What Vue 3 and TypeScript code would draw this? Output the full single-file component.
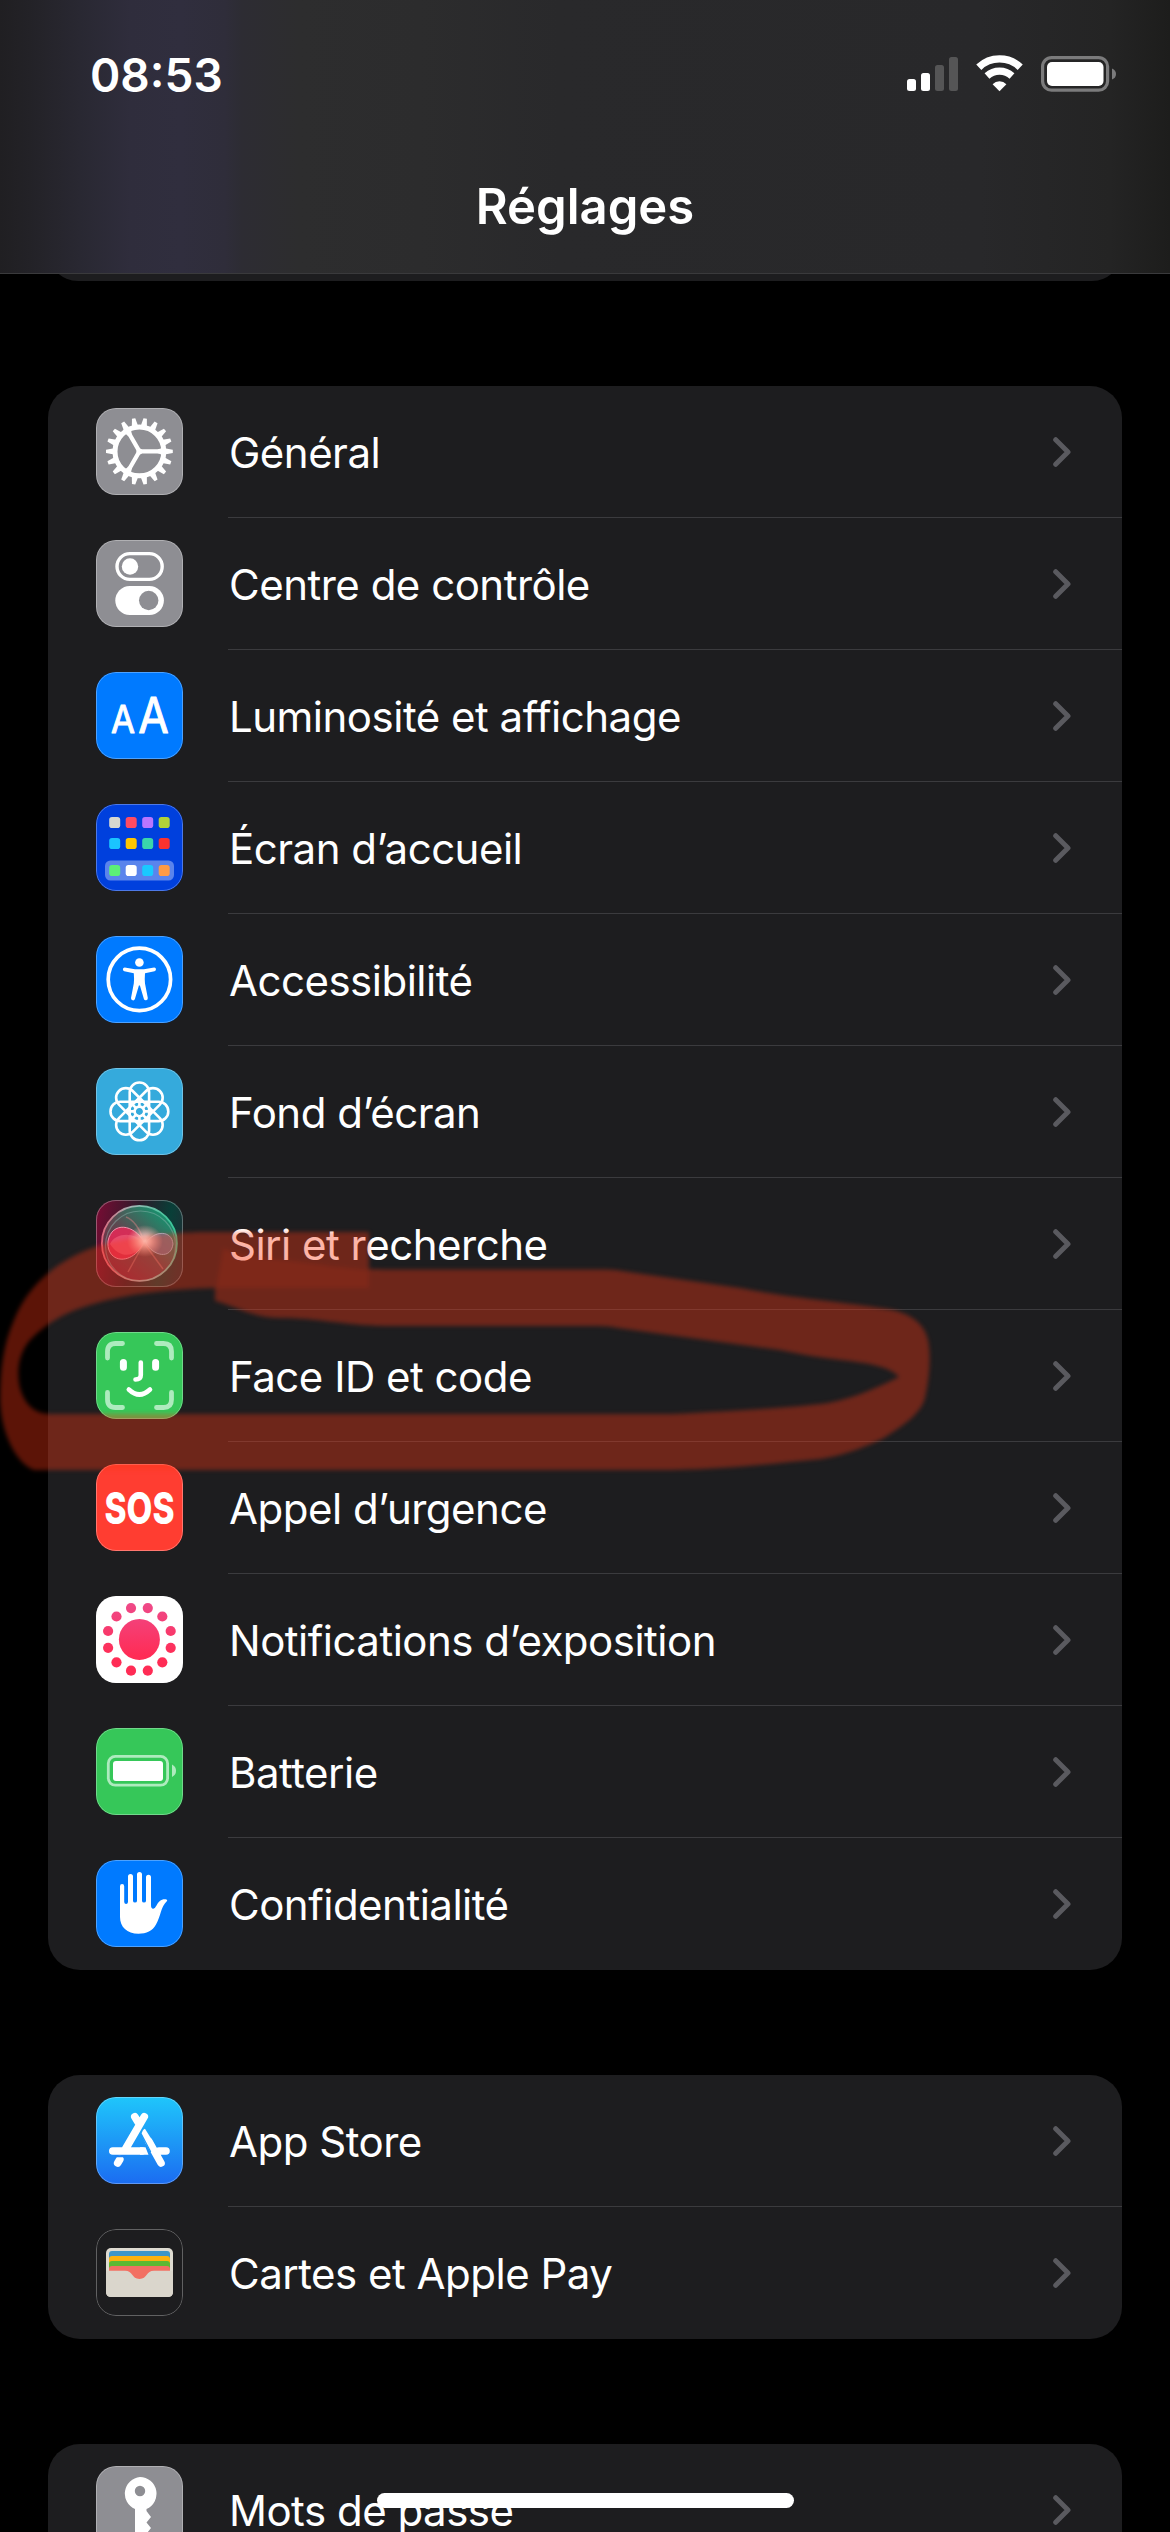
<template>
  <div class="screen">
    <header class="header">
      <div class="status-bar">
        <span class="time">08:53</span>
        <div class="status-icons">
          <svg class="signal" width="51" height="40" viewBox="0 0 51 40">
            <rect x="0" y="26" width="9" height="12" rx="2.5" fill="#fff" />
            <rect x="14" y="20" width="9" height="18" rx="2.5" fill="#fff" />
            <rect x="28" y="12" width="9" height="26" rx="2.5" fill="#555556" />
            <rect x="42" y="4" width="9" height="34" rx="2.5" fill="#555556" />
          </svg>
          <svg class="wifi" width="50" height="40" viewBox="0 0 50 40">
            <path d="M3.8 14.2a30 30 0 0 1 41.4 0" stroke="#fff" stroke-width="7.4" fill="none" />
            <path d="M12 23a18.6 18.6 0 0 1 25 0" stroke="#fff" stroke-width="7.2" fill="none" />
            <path d="M17.6 31.2a9.6 9.6 0 0 1 13.8 0L24.5 38.3z" fill="#fff" />
          </svg>
          <svg class="battery" width="76" height="40" viewBox="0 0 76 40">
            <rect x="1.6" y="4.6" width="65" height="32.6" rx="9" fill="none" stroke="#7b7b7c" stroke-width="3.2" />
            <rect x="6" y="9" width="56.5" height="24" rx="5" fill="#fff" />
            <path d="M71 15.5q4 1.5 4 5.5t-4 5.5z" fill="#7b7b7c" />
          </svg>
        </div>
      </div>
      <h1 class="title">Réglages</h1>
    </header>

    <main class="content">
      <div class="group-tail"><div class="group-tail-body" /></div>

      <section v-for="(group, index) in groups" :key="index" class="group">
        <div v-for="row in group" :key="row.icon" class="row">
          <div :class="['icon', `icon-${row.icon}`]">
            <svg v-if="row.icon === 'general'" viewBox="0 0 87 87">
              <g transform="translate(43.4 43.4)" fill="#fff">
                <path v-for="n in 18" :key="n" d="M24 -3.4L33.4 -1.7V1.7L24 3.4z" :transform="`rotate(${n * 20})`" />
                <circle r="24.4" fill="none" stroke="#fff" stroke-width="5" />
                <path v-for="n in 3" :key="`s${n}`" d="M0 -2.1H18Q21 -2.3 23 -4V4Q21 2.3 18 2.1H0z" :transform="`rotate(${n * 120})`" />
                <circle r="3" />
              </g>
            </svg>

            <svg v-else-if="row.icon === 'control'" viewBox="0 0 87 87">
              <rect x="21" y="13.6" width="45.2" height="25.8" rx="12.9" fill="none" stroke="#fff" stroke-width="3.4" />
              <circle cx="34" cy="26.5" r="8.2" fill="#fff" />
              <rect x="19.3" y="46" width="48.6" height="29" rx="14.5" fill="#fff" />
              <circle cx="52.7" cy="60.5" r="9.7" fill="#8e8e93" />
            </svg>

            <svg v-else-if="row.icon === 'display'" viewBox="0 0 87 87" class="letters">
              <text x="15" y="61" font-size="38" textLength="24" lengthAdjust="spacingAndGlyphs">A</text>
              <text x="42.3" y="61" font-size="49" textLength="30.5" lengthAdjust="spacingAndGlyphs">A</text>
            </svg>

            <svg v-else-if="row.icon === 'home'" viewBox="0 0 87 87">
              <rect x="9" y="56.5" width="69" height="20" rx="5.5" fill="#5a84ec" />
              <rect
                v-for="(color, n) in homeColors"
                :key="n"
                :x="13.2 + (n % 4) * 16.5"
                :y="[13, 34, 61][Math.floor(n / 4)]"
                width="11"
                height="11"
                rx="2.8"
                :fill="color"
              />
            </svg>

            <svg v-else-if="row.icon === 'accessibility'" viewBox="0 0 87 87">
              <circle cx="43.4" cy="43.4" r="31.2" fill="none" stroke="#fff" stroke-width="3.7" />
              <circle cx="43.4" cy="26.5" r="4.3" fill="#fff" />
              <path
                d="M28.7 31.6L39 33.3H48L58.2 31.6Q60 31.7 60 33.2T58.5 35.2L49 37.2Q48.5 43 49 47.5L51.8 62Q52 64 50.2 64.3T47.9 63L43.9 49.5H42.9L38.9 63Q38.3 64.7 36.6 64.3T35 62L37.8 47.5Q38.3 43 37.8 37.2L28.3 35.2Q26.8 34.7 26.9 33.2T28.7 31.6z"
                fill="#fff"
              />
            </svg>

            <svg v-else-if="row.icon === 'wallpaper'" viewBox="0 0 87 87">
              <g transform="translate(43.4 43.4)" fill="none" stroke="#fff" stroke-width="2.6">
                <rect v-for="n in 4" :key="n" x="-9.7" y="-28.9" width="19.4" height="57.8" rx="9.7" :transform="`rotate(${n * 45})`" />
                <path v-for="n in 8" :key="`r${n}`" d="M0 -13.5V-4" :transform="`rotate(${n * 45})`" />
                <circle r="4.8" />
              </g>
            </svg>

            <svg v-else-if="row.icon === 'siri'" viewBox="0 0 87 87">
              <defs>
                <linearGradient id="siriBack" x1="0" y1="0.3" x2="1" y2="0.5">
                  <stop offset="0" stop-color="#720d33" />
                  <stop offset="0.45" stop-color="#2b1c2a" />
                  <stop offset="0.8" stop-color="#093f38" />
                  <stop offset="1" stop-color="#1d3035" />
                </linearGradient>
                <linearGradient id="siriOrb" x1="0.1" y1="0.8" x2="0.8" y2="0">
                  <stop offset="0" stop-color="#7c2541" />
                  <stop offset="0.45" stop-color="#5d4850" />
                  <stop offset="1" stop-color="#0f9a72" />
                </linearGradient>
                <linearGradient id="siriRim" x1="0" y1="0.5" x2="1" y2="0.3">
                  <stop offset="0" stop-color="#e0637b" />
                  <stop offset="0.5" stop-color="#9db8b5" />
                  <stop offset="1" stop-color="#31c897" />
                </linearGradient>
                <radialGradient id="siriGlow">
                  <stop offset="0" stop-color="#fff" />
                  <stop offset="0.3" stop-color="#ffd9d5" stop-opacity="0.85" />
                  <stop offset="1" stop-color="#ffb0a8" stop-opacity="0" />
                </radialGradient>
              </defs>
              <rect width="87" height="87" fill="url(#siriBack)" />
              <circle cx="43.4" cy="43.4" r="37.5" fill="url(#siriOrb)" stroke="url(#siriRim)" stroke-width="1.8" />
              <circle cx="44.5" cy="46" r="35" fill="none" stroke="#8fb7b2" stroke-opacity="0.45" stroke-width="1.2" />
              <path d="M48 42C38 24 16 21 12 41C10 63 36 67 48 42z" fill="#e82958" fill-opacity="0.85" stroke="#f293ac" />
              <path d="M48 43C39 32 20 32 14 44C24 60 41 57 48 43z" fill="#fa6b85" fill-opacity="0.5" />
              <path d="M50 43C58 30 76 30 77 44C75 60 57 56 50 43z" fill="#7b799b" fill-opacity="0.7" stroke="#a1b2c5" />
              <path d="M48 43L67 69M48 43L32 72M48 43C44 27 36 19 30 17" fill="none" stroke="#d38282" stroke-opacity="0.5" stroke-width="1.5" />
              <ellipse cx="49" cy="41" rx="18" ry="16" fill="url(#siriGlow)" />
            </svg>

            <svg v-else-if="row.icon === 'faceid'" viewBox="0 0 87 87" fill="none" stroke="#fff" stroke-linecap="round">
              <path
                d="M11.5 26V19.5Q11.5 11.5 19.5 11.5H26.5M60.5 11.5H67.5Q75.5 11.5 75.5 19.5V26M75.5 60.5V67.5Q75.5 75.5 67.5 75.5H60.5M26.5 75.5H19.5Q11.5 75.5 11.5 67.5V60.5"
                stroke="#aeebbe"
                stroke-width="4.8"
              />
              <path d="M27.4 30.5V35.3M59.6 30.5V35.3" stroke-width="7" />
              <path d="M44.8 30.5V43Q44.8 47.5 39.5 47.5" stroke-width="4.6" />
              <path d="M32.8 57.5Q43.4 67.5 54 57.5" stroke-width="4.6" />
            </svg>

            <svg v-else-if="row.icon === 'sos'" viewBox="0 0 87 87" class="sos">
              <text transform="translate(43.5 59.6) scale(0.76 1)">SOS</text>
            </svg>

            <svg v-else-if="row.icon === 'exposure'" viewBox="0 0 87 87">
              <defs>
                <linearGradient id="exposure" gradientUnits="userSpaceOnUse" x1="0" y1="5" x2="0" y2="60">
                  <stop offset="0" stop-color="#ee4b8b" />
                  <stop offset="1" stop-color="#ff2c55" />
                </linearGradient>
              </defs>
              <g fill="url(#exposure)">
                <circle cx="43.4" cy="43.4" r="20.5" />
                <circle v-for="(dot, n) in exposureDots" :key="n" :cx="dot.x" :cy="dot.y" r="5.1" />
              </g>
            </svg>

            <svg v-else-if="row.icon === 'battery'" viewBox="0 0 87 87">
              <rect x="12.3" y="28.4" width="59.3" height="28.8" rx="7" fill="none" stroke="#aeebbe" stroke-width="2.8" />
              <rect x="17" y="33" width="50" height="20" rx="3" fill="#fff" />
              <path d="M76 36.5Q80 38.5 80 42.8T76 49z" fill="#aeebbe" />
            </svg>

            <svg v-else-if="row.icon === 'privacy'" viewBox="0 0 87 87">
              <path
                d="M24 26.2a2.1 2.1 0 0 1 4.2 0V42q.2 1.9 1.9 1.9t1.9-1.9V16.6a2.5 2.5 0 0 1 5 0V41q.2 1.6 2 1.6t2-1.6V14.5a2.5 2.5 0 0 1 5 0V41q.2 1.6 2 1.6t2-1.6V17.3a2.5 2.5 0 0 1 5 0V45Q55 49 57.3 48.8Q59 48.5 60.5 45.5C62.5 41.5 66 38.5 70.5 39.6Q71.7 40.2 71 41C64.5 47 65 56 60 64.5C56.5 71 50.5 73.7 42.5 73.7C31 73.7 24 67 24 57z"
                fill="#fff"
              />
            </svg>

            <svg v-else-if="row.icon === 'appstore'" viewBox="0 0 87 87" fill="none" stroke="#fff" stroke-width="7.6" stroke-linecap="round">
              <path d="M48.3 19.7L29.5 52M38.8 19.7L43.5 27.5M65 66L53 44.5M70 54H63M16.8 54H46M23.8 62.5L21.7 66" />
              <path d="M45.5 37.5Q46.5 32.5 49 31.8L56.3 43.5L50 47z" fill="#fff" stroke="none" />
              <path d="M44 50.2H49.5L52.5 57.8H44z" fill="#fff" stroke="none" />
              <path d="M20 59.3H29.5" stroke="#1e83f4" stroke-width="2" />
              <path d="M45.5 37.5L54.5 54.5" stroke="#1f97f7" stroke-width="1.3" />
            </svg>

            <svg v-else-if="row.icon === 'wallet'" viewBox="0 0 87 87">
              <rect x="10" y="19" width="67" height="49" rx="5" fill="#dedbd1" />
              <path d="M13 42V25Q13 22 16 22H71Q74 22 74 25V42z" fill="#3d96c9" />
              <path d="M13 42V30Q13 27 16 27H71Q74 27 74 30V42z" fill="#fdb20f" />
              <path d="M13 42V35Q13 32 16 32H71Q74 32 74 35V42z" fill="#5cb832" />
              <path d="M13 42V40Q13 37 16 37H71Q74 37 74 40V42L52 52H36z" fill="#f27063" />
              <path d="M10 41.8H29C37 41.8 35.5 50 43.5 50S50 41.8 58 41.8H77V63Q77 68 72 68H15Q10 68 10 63z" fill="#dad6cc" />
            </svg>

            <svg v-else viewBox="0 0 87 87">
              <path
                fill-rule="evenodd"
                d="M44 11a16.7 16.7 0 0 1 6.5 32V45L55 51L50.5 56.5L55 62L44 76L39 70V43A16.7 16.7 0 0 1 44 11zM44 19.8a5.2 5.2 0 1 0 0 10.4a5.2 5.2 0 1 0 0 -10.4z"
                fill="#fff"
              />
            </svg>
          </div>

          <div class="row-body">
            <span class="label">{{ row.label }}</span>
            <svg class="chevron" width="18" height="30" viewBox="0 0 18 30">
              <path d="M2.7 2.7L15 15L2.7 27.3" />
            </svg>
          </div>
        </div>
      </section>
    </main>

    <!-- Highlighter loop around "Face ID et code" -->
    <svg class="marker" width="1170" height="340" viewBox="0 1180 1170 340">
      <path
        fill-rule="evenodd"
        d="M369 1232H200C155 1234 120 1238 92 1248C50 1264 26 1290 14 1320C3 1345 0 1372 0 1400C1 1430 14 1462 34 1470H672C730 1469 780 1463 821 1459C850 1454 866 1446 882 1439C905 1425 921 1413 925 1398C930 1375 931 1355 928 1340C924 1322 908 1311 881 1308C850 1303 790 1298 740 1288L622 1271Q615 1269 600 1269.5H385L369 1269z
        M215 1288C170 1289 130 1293 90 1305C60 1314 44 1326 30 1340C17 1355 17 1375 20 1388C24 1402 33 1414 50 1414H672C730 1411 790 1408 828 1403C856 1398 880 1386 899 1377C890 1367 872 1364 850 1361C820 1358 800 1354 780 1350L618 1328Q610 1326 598 1326H385C340 1325 320 1318 280 1318C250 1317 235 1306 215 1301z"
      />
      <path class="marker-overlap" d="M223 1248C245 1259 300 1260 330 1266L369 1270V1288H216z" />
    </svg>

    <div class="home-indicator" />
  </div>
</template>

<script setup lang="ts">
interface Row {
  icon: string
  label: string
}

const groups: Row[][] = [
  [
    { icon: 'general', label: 'Général' },
    { icon: 'control', label: 'Centre de contrôle' },
    { icon: 'display', label: 'Luminosité et affichage' },
    { icon: 'home', label: 'Écran d’accueil' },
    { icon: 'accessibility', label: 'Accessibilité' },
    { icon: 'wallpaper', label: 'Fond d’écran' },
    { icon: 'siri', label: 'Siri et recherche' },
    { icon: 'faceid', label: 'Face ID et code' },
    { icon: 'sos', label: 'Appel d’urgence' },
    { icon: 'exposure', label: 'Notifications d’exposition' },
    { icon: 'battery', label: 'Batterie' },
    { icon: 'privacy', label: 'Confidentialité' }
  ],
  [
    { icon: 'appstore', label: 'App Store' },
    { icon: 'wallet', label: 'Cartes et Apple Pay' }
  ],
  [{ icon: 'passwords', label: 'Mots de passe' }]
]

const homeColors = [
  '#d8d8d0', '#ff4b63', '#b975ff', '#b1d238',
  '#1ac4ff', '#ffc600', '#3ad6ab', '#fa3230',
  '#5cf077', '#ffffff', '#1ac9ff', '#ff9b44'
]

const exposureDots = Array.from({ length: 12 }, (_, n) => {
  const angle = ((n * 30 + 15) * Math.PI) / 180
  return { x: 43.4 + Math.cos(angle) * 32.4, y: 43.4 + Math.sin(angle) * 32.4 }
})
</script>

<style>
body {
  background: #000;
}
</style>

<style scoped>
.screen {
  position: relative;
  width: 1170px;
  height: 2532px;
  overflow: hidden;
  background: #000;
  color: #fff;
  font-family: Inter, "Liberation Sans", sans-serif;
}

.header {
  box-sizing: border-box;
  height: 274px;
  border-bottom: 1px solid #3a3a3c;
  background: linear-gradient(
    90deg,
    #201f22 0,
    #232227 30px,
    #292832 80px,
    #2f2d3c 130px,
    #302e3e 180px,
    #2f2d3a 225px,
    #2d2c33 242px,
    #2d2d2e 300px,
    #2c2c2d 420px,
    #29292b 560px,
    #28282a 980px,
    #242424 1110px,
    #1d1d1c 1170px
  );
}

.status-bar {
  display: flex;
  justify-content: space-between;
  height: 160px;
  padding: 0 53px 0 90px;
}

.time {
  margin-top: 47px;
  font-size: 46px;
  font-weight: 600;
  line-height: 56px;
}

.status-icons {
  display: flex;
  margin-top: 53px;
}

.wifi {
  margin: 0 16px 0 17px;
}

.title {
  margin: 17px 0 0;
  font-size: 49px;
  font-weight: 600;
  line-height: 60px;
  text-align: center;
}

.content {
  display: flex;
  flex-direction: column;
  gap: 105px;
  padding: 0 48px;
}

.group-tail {
  display: flex;
  align-items: flex-end;
  height: 7px;
  overflow: hidden;
}

.group-tail-body {
  flex: 1;
  flex-shrink: 0;
  height: 60px;
  border-radius: 32px;
  background: #1d1d1f;
}

.group {
  overflow: hidden;
  border-radius: 32px;
  background: #1d1d1f;
}

.row {
  display: flex;
  align-items: center;
  gap: 45px;
  height: 132px;
  padding-left: 48px;
}

.row-body {
  box-sizing: border-box;
  display: flex;
  flex: 1;
  align-items: center;
  justify-content: space-between;
  height: 132px;
  padding: 0 51px 0 0;
  border-bottom: 1px solid #3b3b3e;
}

.row:last-child .row-body {
  border-bottom-color: transparent;
}

.label {
  padding: 3px 0 0 1px;
  font-size: 42px;
  line-height: 52px;
  letter-spacing: -0.5px;
  white-space: nowrap;
}

.chevron path {
  fill: none;
  stroke: #5a5a5f;
  stroke-width: 5;
  stroke-linecap: round;
  stroke-linejoin: round;
}

.icon {
  position: relative;
  width: 87px;
  height: 87px;
  margin-bottom: 1px;
  overflow: hidden;
  border-radius: 20px;
  background: #8e8e93;
}

.icon::after {
  content: "";
  position: absolute;
  inset: 0;
  border: 1px solid rgba(255, 255, 255, 0.3);
  border-radius: 20px;
}

.icon svg {
  display: block;
  width: 87px;
  height: 87px;
}

.icon-display,
.icon-accessibility,
.icon-privacy {
  background: #007aff;
}

.icon-home {
  background: #0040dd;
}

.icon-wallpaper {
  background: #35aadc;
}

.icon-faceid,
.icon-battery {
  background: #36c759;
}

.icon-sos {
  background: #ff3d31;
}

.icon-exposure {
  background: #fff;
}

.icon-appstore {
  background: linear-gradient(#1fc6fb, #1b6cf1);
}

.icon-wallet {
  background: #1d1d1f;
}

.letters text {
  fill: #fff;
  stroke: #fff;
  stroke-width: 1;
  stroke-linejoin: round;
  font-weight: 400;
}

.sos text {
  fill: #fff;
  font-size: 44px;
  font-weight: 800;
  text-anchor: middle;
}

.marker {
  position: absolute;
  top: 1180px;
  left: 0;
  fill: rgba(250, 54, 18, 0.37);
  filter: blur(2px);
}

.marker-overlap {
  fill: rgba(250, 54, 18, 0.12);
}

.home-indicator {
  position: absolute;
  bottom: 24px;
  left: 377px;
  width: 417px;
  height: 15px;
  border-radius: 8px;
  background: #fff;
}
</style>
